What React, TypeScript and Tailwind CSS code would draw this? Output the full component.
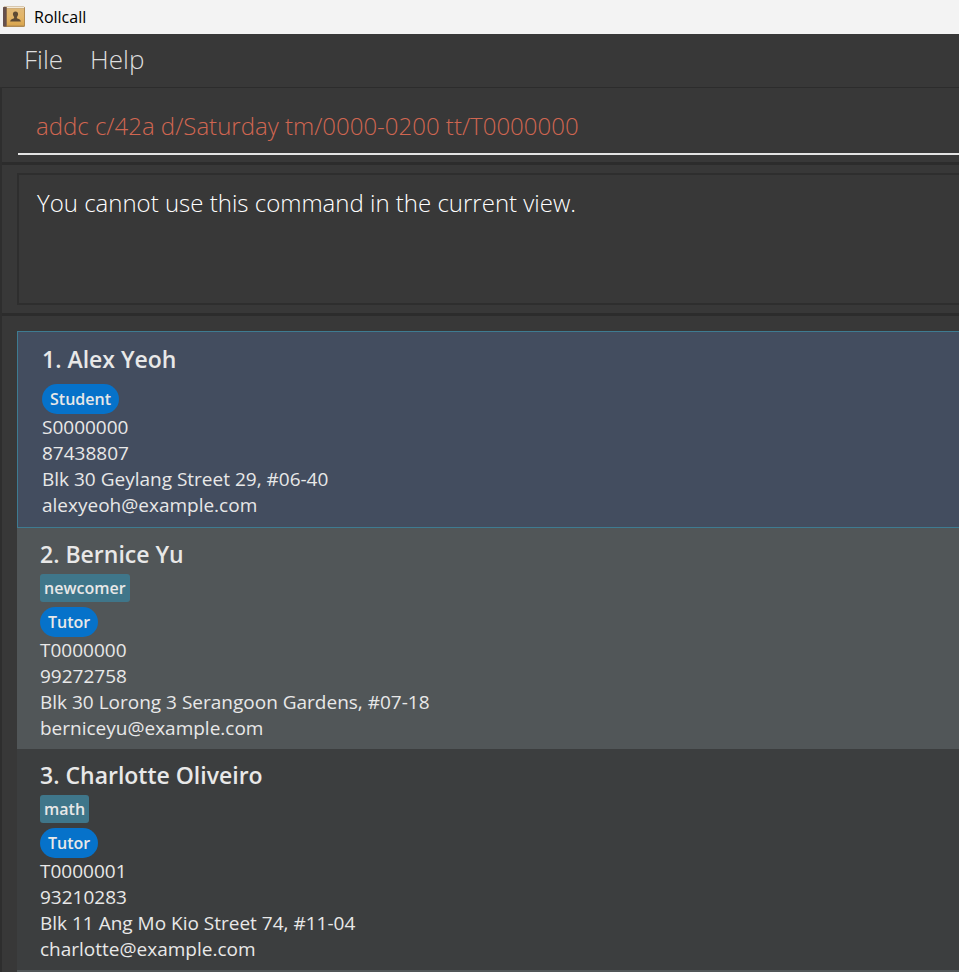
type Person = {
  name: string;
  tags: string[];
  role: string;
  id: string;
  phone: string;
  address: string;
  email: string;
};

const people: Person[] = [
  {
    name: "Alex Yeoh",
    tags: [],
    role: "Student",
    id: "S0000000",
    phone: "87438807",
    address: "Blk 30 Geylang Street 29, #06-40",
    email: "alexyeoh@example.com",
  },
  {
    name: "Bernice Yu",
    tags: ["newcomer"],
    role: "Tutor",
    id: "T0000000",
    phone: "99272758",
    address: "Blk 30 Lorong 3 Serangoon Gardens, #07-18",
    email: "berniceyu@example.com",
  },
  {
    name: "Charlotte Oliveiro",
    tags: ["math"],
    role: "Tutor",
    id: "T0000001",
    phone: "93210283",
    address: "Blk 11 Ang Mo Kio Street 74, #11-04",
    email: "charlotte@example.com",
  },
];

function AddressBookIcon() {
  return (
    <svg width="22" height="22" viewBox="0 0 22 22" aria-hidden="true">
      <defs>
        <linearGradient id="cover" x1="0" y1="0" x2="0" y2="1">
          <stop offset="0" stopColor="#dfb877" />
          <stop offset="0.5" stopColor="#e3b568" />
          <stop offset="1" stopColor="#d9a54c" />
        </linearGradient>
      </defs>
      <rect x="0" y="0.5" width="22" height="20.5" rx="1.5" fill="#b08a52" />
      <rect x="4" y="2.5" width="17" height="17" fill="url(#cover)" />
      <rect x="2" y="0.8" width="19" height="1.4" fill="#f3ead9" />
      <rect x="0" y="1" width="4" height="19.5" rx="1" fill="#65504c" />
      <rect x="3" y="2" width="1" height="18" fill="#8b6c4a" />
      <path
        d="M12.5 5.5c1.7 0 2.7 1.2 2.6 2.8-.1 1.2-.6 2-1.2 2.7v1.2c1.5.6 3.8 1 4 3.3H7.1c.2-2.3 2.5-2.7 4-3.3V11c-.6-.7-1.1-1.5-1.2-2.7-.1-1.6.9-2.8 2.6-2.8z"
        fill="#5e4a33"
      />
    </svg>
  );
}

function PersonCard({ person, index }: { person: Person; index: number }) {
  const selected = index === 0;
  const surface = selected
    ? "border border-r-0 border-[#3e7b91] bg-[#434d5f] py-[9px] pl-6"
    : index % 2 === 1
      ? "bg-[#515658] py-2 pl-[23px]"
      : "bg-[#3c3e3f] py-2 pl-[23px]";
  return (
    <li className={`${surface} text-[#e8e8e8]`}>
      <h2 className="pb-0.5 text-[23px] leading-9 font-semibold">
        {index + 1}. {person.name}
      </h2>
      <div className="flex gap-1">
        {person.tags.map((tag) => (
          <span
            key={tag}
            className="rounded-[3px] bg-[#3f768a] px-1 text-base leading-7 font-semibold"
          >
            {tag}
          </span>
        ))}
      </div>
      <div className="mt-[5px] flex">
        <span className="rounded-full bg-[#0672ca] px-2 text-base leading-[30px] font-semibold">
          {person.role}
        </span>
      </div>
      <p>{person.id}</p>
      <p>{person.phone}</p>
      <p>{person.address}</p>
      <p>{person.email}</p>
    </li>
  );
}

export default function App() {
  return (
    <div className="flex h-screen flex-col overflow-hidden bg-[#383838] font-['Open_Sans','Noto_Sans',sans-serif]">
      <header className="flex h-[34px] shrink-0 items-center gap-[9px] bg-[#f3f3f3] pl-[3px] text-base text-black">
        <AddressBookIcon />
        <h1>Rollcall</h1>
      </header>
      <nav className="flex h-[53px] shrink-0 items-center gap-[27px] pb-0.5 pl-6 text-[26px] font-light text-[#dedede]">
        <button type="button">File</button>
        <button type="button">Help</button>
      </nav>
      <main className="flex min-h-0 grow flex-col border-l-2 border-[#2e2e2e]">
        <section className="h-[78px] shrink-0 border-t border-b-[3px] border-[#2c2c2c] pl-4">
          <input
            aria-label="Command"
            defaultValue="addc c/42a d/Saturday tm/0000-0200 tt/T0000000"
            spellCheck={false}
            className="h-[67px] w-full border-b-2 border-[#e4e4e4] bg-transparent pt-2.5 pl-[18px] text-2xl font-light text-[#d06651] outline-none"
          />
        </section>
        <section className="shrink-0 border-b-[3px] border-[#2c2c2c] pt-2 pb-2 pl-[15px]">
          <output className="block h-[132px] border-2 border-r-0 border-[#2e2e2e] pt-2 pl-[18px] text-2xl leading-10 font-light text-white">
            You cannot use this command in the current view.
          </output>
        </section>
        <ul className="mt-[15px] ml-[15px] min-h-0 grow bg-[#515658] text-[19px] leading-[26px]">
          {people.map((person, i) => (
            <PersonCard key={person.id} person={person} index={i} />
          ))}
        </ul>
      </main>
    </div>
  );
}
